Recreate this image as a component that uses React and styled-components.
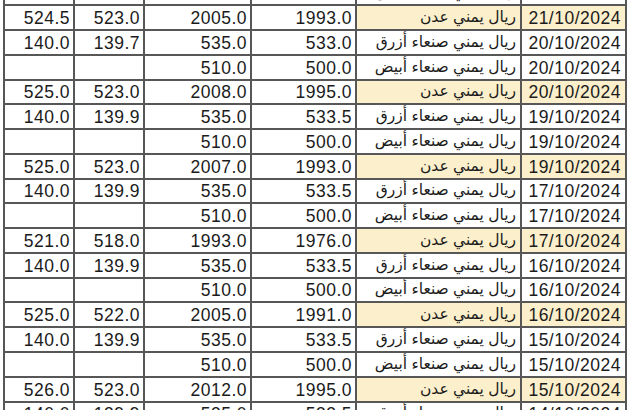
import React from "react";
import styled, { createGlobalStyle } from "styled-components";

const Global = createGlobalStyle`
  html, body { margin: 0; padding: 0; background: #ffffff; overflow: hidden; }
  body { font-family: "Liberation Sans", Arial, sans-serif; }
`;

const Page = styled.div`
  width: 634px;
  height: 410px;
  overflow: hidden;
  background: #ffffff;
  padding-left: 3px;
  box-sizing: border-box;
`;

const Sheet = styled.div`
  display: grid;
  grid-template-columns: 70px 70px 107px 105px 165px 105px;
  grid-auto-rows: 24.78px;
  width: 624px;
  margin-top: -18.5px;
  border-left: 2px solid #575757;
  direction: ltr;
`;

const Cell = styled.div`
  box-sizing: border-box;
  display: flex;
  align-items: flex-end;
  justify-content: flex-end;
  border-right: 2px solid #575757;
  border-bottom: 2px solid #575757;
  background: ${(p) => (p.$hl ? "#fcefcb" : "#ffffff")};
  padding: 0 ${(p) => (p.$pr ?? 3)}px 1px 0;
  font-family: "Liberation Sans", Arial, "DejaVu Sans", sans-serif;
  font-size: 17.5px;
  letter-spacing: 0.5px;
  line-height: 20px;
  color: #1b1b1b;
  white-space: nowrap;
  overflow: hidden;
`;

const Name = styled(Cell)`
  direction: rtl;
  justify-content: flex-start;
  letter-spacing: 0;
  font-size: 15.5px;
  padding: 0 4px 2px 0;
`;

const ADEN = "ريال يمني عدن";
const BLUE = "ريال يمني صنعاء أزرق";
const WHITE = "ريال يمني صنعاء أبيض";

const rows = [
  ["", "", "510.0", "500.0", WHITE, "21/10/2024"],
  ["524.5", "523.0", "2005.0", "1993.0", ADEN, "21/10/2024"],
  ["140.0", "139.7", "535.0", "533.0", BLUE, "20/10/2024"],
  ["", "", "510.0", "500.0", WHITE, "20/10/2024"],
  ["525.0", "523.0", "2008.0", "1995.0", ADEN, "20/10/2024"],
  ["140.0", "139.9", "535.0", "533.5", BLUE, "19/10/2024"],
  ["", "", "510.0", "500.0", WHITE, "19/10/2024"],
  ["525.0", "523.0", "2007.0", "1993.0", ADEN, "19/10/2024"],
  ["140.0", "139.9", "535.0", "533.5", BLUE, "17/10/2024"],
  ["", "", "510.0", "500.0", WHITE, "17/10/2024"],
  ["521.0", "518.0", "1993.0", "1976.0", ADEN, "17/10/2024"],
  ["140.0", "139.9", "535.0", "533.5", BLUE, "16/10/2024"],
  ["", "", "510.0", "500.0", WHITE, "16/10/2024"],
  ["525.0", "522.0", "2005.0", "1991.0", ADEN, "16/10/2024"],
  ["140.0", "139.9", "535.0", "533.5", BLUE, "15/10/2024"],
  ["", "", "510.0", "500.0", WHITE, "15/10/2024"],
  ["526.0", "523.0", "2012.0", "1995.0", ADEN, "15/10/2024"],
  ["140.0", "139.9", "535.0", "533.5", BLUE, "14/10/2024"],
];

export default function App() {
  return (
    <Page>
      <Global />
      <Sheet>
        {rows.map((r, i) => {
          const hl = r[4] === ADEN;
          return (
            <React.Fragment key={i}>
              <Cell>{r[0]}</Cell>
              <Cell>{r[1]}</Cell>
              <Cell>{r[2]}</Cell>
              <Cell>{r[3]}</Cell>
              <Name $hl={hl}>{r[4]}</Name>
              <Cell $hl={hl} $pr={4}>{r[5]}</Cell>
            </React.Fragment>
          );
        })}
      </Sheet>
    </Page>
  );
}
